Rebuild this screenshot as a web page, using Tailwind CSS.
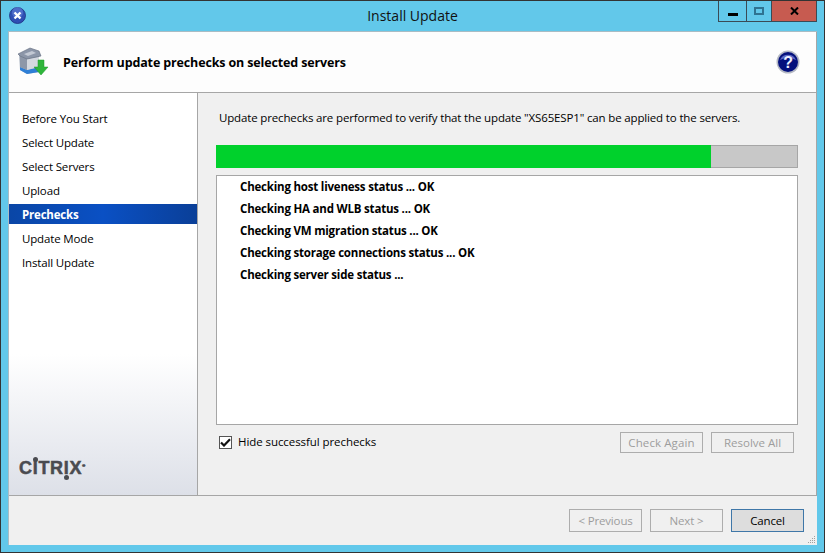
<!DOCTYPE html>
<html lang="en">
<head>
  <meta charset="UTF-8">
  <title>Install Update</title>
  <script src="https://cdn.jsdelivr.net/npm/@tailwindcss/browser@4"></script>
</head>
<body class="bg-[#62c8ea] overflow-hidden">
  <div class="w-[825px] h-[553px] border border-[#333] bg-[#62c8ea] flex flex-col font-['Open_Sans','Noto_Sans',sans-serif] text-[11.5px] tracking-[-0.15px] text-black">
    <!-- title bar -->
    <div class="relative h-[30px] shrink-0 flex justify-center items-start">
      <svg class="absolute left-[8px] top-[6px]" width="17" height="17" viewBox="0 0 17 17">
        <circle cx="8.5" cy="8.5" r="8" fill="#2f4fb4" stroke="#1c2f80" stroke-width="0.8"/>
        <circle cx="8.5" cy="5.5" r="5.5" fill="#6d8ce0" opacity="0.5"/>
        <path d="M5.5 5.5 L11.5 11.5 M11.5 5.5 L5.5 11.5" stroke="#fff" stroke-width="2.4"/>
      </svg>
      <div class="text-[14px] tracking-normal leading-[20px] mt-[5px] text-[#111]">Install Update</div>
      <div class="absolute top-0 left-[717px] h-[21px] flex border-x border-b border-[#3a4a55]">
        <div class="w-[28px] flex items-center justify-center border-r border-[#3a4a55]"><div class="w-[10px] h-[3px] bg-black mt-[6px]"></div></div>
        <div class="w-[25px] flex items-center justify-center border-r border-[#3a4a55]"><div class="w-[10px] h-[8px] border-2 border-[#2f7391]"></div></div>
        <div class="w-[44px] flex items-center justify-center bg-[#c75b50]">
          <svg width="9" height="8" viewBox="0 0 9 8"><path d="M1 0.5 L8 7.5 M8 0.5 L1 7.5" stroke="#000" stroke-width="2"/></svg>
        </div>
      </div>
    </div>

    <!-- client area -->
    <div class="mx-[7px] w-[809px] h-[514px] flex flex-col bg-[#f0f0f0] border-t border-l border-[#a9bcc4]">
      <!-- header -->
      <div class="h-[61px] shrink-0 bg-[#fdfdfd] border-b border-r border-[#a6a6a6] flex items-center relative">
        <svg class="ml-[8px] mt-[-1px]" width="32" height="32" viewBox="0 0 32 32">
          <path d="M2 8 L16 5 L22 9 L22 26 L10 28 L3 24 Z" fill="#aab4c2"/>
          <path d="M3 21 L10 24 L22 21 L22 26 L10 28 L3 24 Z" fill="#2f7fd6"/>
          <path d="M10 13 L22 11 L22 21 L10 24 Z" fill="#d5d9e0"/>
          <path d="M3 10 L10 13 L10 24 L3 21 Z" fill="#8d97a8"/>
          <path d="M1 8 L13 2 L22 5 L24 10 L10 13 L3 10 Z" fill="#8c96a8" stroke="#626c7e" stroke-width="0.6"/>
          <path d="M7 8 L15 5 L19 7 L11 10 Z" fill="#c3c9d4"/>
          <path d="M21 14 L27 14 L27 21 L31 21 L24 29 L17 21 L21 21 Z" fill="#2fb53a" stroke="#1f9a2c" stroke-width="0.5"/>
        </svg>
        <div class="ml-[14px] mt-[1px] font-bold text-[12.5px] tracking-[-0.14px] leading-[18px] text-black">Perform update prechecks on selected servers</div>
        <svg class="absolute left-[767px] top-[18px]" width="24" height="24" viewBox="0 0 24 24">
          <circle cx="12" cy="12" r="11.5" fill="#b4b8c4"/>
          <circle cx="12" cy="12" r="10" fill="#04107c"/>
          <path d="M4 10 A8.5 8 0 0 1 20 10 A14 10 0 0 0 4 10" fill="#5a68c4"/>
          <text x="12" y="17.5" text-anchor="middle" font-family="Liberation Sans" font-weight="700" font-size="16" fill="#eef0ff">?</text>
        </svg>
      </div>

      <!-- body -->
      <div class="h-[403px] shrink-0 flex border-b border-r border-[#a6a6a6]">
        <!-- sidebar -->
        <div class="w-[189px] shrink-0 border-r border-[#a6a6a6] bg-gradient-to-b from-white from-65% to-[#dde0e8] flex flex-col pt-[15px]">
          <div class="h-[24px] pl-[13px] leading-[22px]">Before You Start</div>
          <div class="h-[24px] pl-[13px] leading-[22px]">Select Update</div>
          <div class="h-[24px] pl-[13px] leading-[22px]">Select Servers</div>
          <div class="h-[24px] pl-[13px] leading-[22px]">Upload</div>
          <div class="h-[20px] mb-[4px] pl-[13px] leading-[22px] font-bold tracking-[-0.2px] text-white bg-gradient-to-r from-[#0a46a6] via-[#0a50c4] to-[#0a3f98]">Prechecks</div>
          <div class="h-[24px] pl-[13px] leading-[22px]">Update Mode</div>
          <div class="h-[24px] pl-[13px] leading-[22px]">Install Update</div>
          <div class="mt-auto mb-[20px] ml-[10px] font-['Liberation_Sans',sans-serif] font-bold text-[18px] leading-[13px] tracking-[0.7px] [-webkit-text-stroke:0.5px_#4a4b50] text-[#4a4b50] flex items-start">C<span class="relative">I<span class="absolute left-[0px] top-[-5px] w-[5px] h-[5px] rounded-full bg-[#4a4b50]"></span></span>TR<span class="relative">I<span class="absolute left-[0px] bottom-[-5px] w-[5px] h-[5px] rounded-full bg-[#4a4b50]"></span></span>X<span class="text-[4px] leading-[8px] font-normal">®</span></div>
        </div>
        <!-- main -->
        <div class="flex-1 flex flex-col pl-[18px]">
          <div class="pl-[3px] h-[52px] pt-[16px] leading-[18px]">Update prechecks are performed to verify that the update "XS65ESP1" can be applied to the servers.</div>
          <div class="h-[23px] w-[582px] border border-[#a6a6a6] bg-[#c8c8c8] shrink-0">
            <div class="-m-px h-[23px] bg-[#00d12c]" style="width: 495px"></div>
          </div>
          <div class="mt-[7px] h-[250px] w-[582px] shrink-0 border border-[#a6a6a6] bg-white pt-[2px] pl-[23px] font-bold tracking-[-0.2px]">
            <div class="h-[22px] leading-[18px]">Checking host liveness status ... OK</div>
            <div class="h-[22px] leading-[18px]">Checking HA and WLB status ... OK</div>
            <div class="h-[22px] leading-[18px]">Checking VM migration status ... OK</div>
            <div class="h-[22px] leading-[18px]">Checking storage connections status ... OK</div>
            <div class="h-[22px] leading-[18px]">Checking server side status ...</div>
          </div>
          <div class="mt-[7px] w-[578px] flex items-start justify-between">
            <div class="flex items-center ml-[3px] mt-[1px] h-[18px]">
              <div class="w-[13px] h-[13px] border border-[#555] bg-white flex items-center justify-center">
                <svg width="11" height="9" viewBox="0 0 11 9"><path d="M1 4.5 L4 7.5 L10 1.2" fill="none" stroke="#111" stroke-width="2.2"/></svg>
              </div>
              <span class="ml-[6px] tracking-[-0.07px]">Hide successful prechecks</span>
            </div>
            <div class="flex gap-[8px]">
              <div class="w-[83px] h-[21px] border border-[#adadad] text-[#9d9d9d] text-center leading-[19px] tracking-[0.1px]">Check Again</div>
              <div class="w-[83px] h-[21px] border border-[#adadad] text-[#9d9d9d] text-center leading-[19px] tracking-normal">Resolve All</div>
            </div>
          </div>
        </div>
      </div>

      <!-- footer -->
      <div class="relative flex-1 flex justify-end items-start gap-[8px] pt-[13px] pr-[13px]">
        <div class="w-[73px] h-[23px] border border-[#adadad] text-[#9d9d9d] text-center leading-[21px]">&lt; Previous</div>
        <div class="w-[73px] h-[23px] border border-[#adadad] text-[#9d9d9d] text-center leading-[21px]">Next &gt;</div>
        <div class="w-[73px] h-[23px] border border-[#3f77a8] bg-[#dddddd] text-center leading-[21px]">Cancel</div>
        <svg class="absolute right-[1px] bottom-[1px]" width="9" height="9" viewBox="0 0 9 9" fill="#a0a0a0">
          <rect x="7" y="1" width="1" height="1"/><rect x="5" y="3" width="1" height="1"/><rect x="7" y="3" width="1" height="1"/>
          <rect x="3" y="5" width="1" height="1"/><rect x="5" y="5" width="1" height="1"/><rect x="7" y="5" width="1" height="1"/>
          <rect x="1" y="7" width="1" height="1"/><rect x="3" y="7" width="1" height="1"/><rect x="5" y="7" width="1" height="1"/><rect x="7" y="7" width="1" height="1"/>
        </svg>
      </div>
    </div>
  </div>
</body>
</html>
